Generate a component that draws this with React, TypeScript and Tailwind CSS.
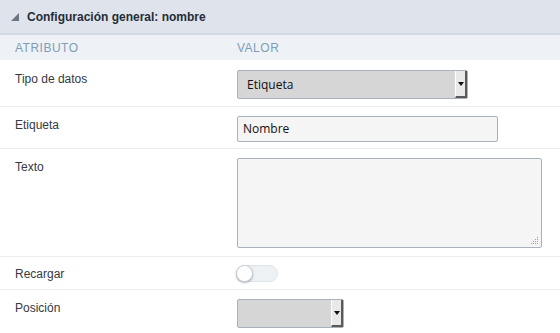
import React from 'react';

const label = "text-[12px] text-[#333a44]";

const SelectBox: React.FC<{ value: string; width: string }> = ({ value, width }) => (
  <div className={`${width} h-[29px] flex border border-[#a9b1bc] bg-[#d6d6d6] rounded-[2px]`}>
    <div className="flex-1 flex items-center pl-[9px] text-[12px] text-[#111] font-['Open_Sans',sans-serif]">{value}</div>
    <div className="w-[12px] flex items-center justify-center bg-[#e9e9e9] border-l border-l-white border-r-2 border-r-[#5a5a5a] border-b-2 border-b-[#5a5a5a]">
      <svg width="6" height="4" viewBox="0 0 6 4"><path d="M0 0h6L3 4z" fill="#111" /></svg>
    </div>
  </div>
);

const Row: React.FC<{ name: string; children: React.ReactNode; className?: string }> = ({ name, children, className }) => (
  <div className={`flex border-b border-[#eceff2] ${className ?? ''}`}>
    <div className={`w-[237px] shrink-0 pl-[15px] ${label}`}>{name}</div>
    <div className="flex-1">{children}</div>
  </div>
);

const App: React.FC = () => {
  return (
    <div className="w-[560px] h-[333px] bg-white overflow-hidden font-['Liberation_Sans',Arial,sans-serif]">
      <div className="h-[35px] flex items-center gap-[8px] pl-[11px] bg-[#dfe4ec] border-b-2 border-[#d3d9e2]">
        <svg width="8" height="8" viewBox="0 0 8 8"><path d="M8 0v8H0z" fill="#6b7480" /></svg>
        <span className="text-[12px] font-bold text-[#262c36]">Configuración general: nombre</span>
      </div>
      <div className="h-[25px] flex items-center bg-[#eef2f6] text-[12px] tracking-[0.5px] text-[#7f9db5]">
        <div className="w-[237px] shrink-0 pl-[15px]">ATRIBUTO</div>
        <div>VALOR</div>
      </div>
      <Row name="Tipo de datos" className="h-[47px] pt-[10px]">
        <SelectBox value="Etiqueta" width="w-[231px]" />
      </Row>
      <Row name="Etiqueta" className="h-[42px] pt-[9px]">
        <div className="w-[261px] h-[26px] flex items-center pl-[5px] bg-[#f5f5f5] border border-[#a9b1bc] rounded-[2px] text-[12px] text-[#111] font-['Open_Sans',sans-serif]">Nombre</div>
      </Row>
      <Row name="Texto" className="h-[108px] pt-[9px]">
        <div className="relative w-[305px] h-[90px] bg-[#f5f5f5] border border-[#a9b1bc] rounded-[2px]">
          <svg className="absolute right-[2px] bottom-[2px]" width="9" height="9" viewBox="0 0 9 9" fill="#9aa0a6">
            <rect x="7" y="1" width="1" height="1" />
            <rect x="5" y="3" width="1" height="1" /><rect x="7" y="3" width="1" height="1" />
            <rect x="3" y="5" width="1" height="1" /><rect x="5" y="5" width="1" height="1" /><rect x="7" y="5" width="1" height="1" />
            <rect x="1" y="7" width="1" height="1" /><rect x="3" y="7" width="1" height="1" /><rect x="5" y="7" width="1" height="1" /><rect x="7" y="7" width="1" height="1" />
          </svg>
        </div>
      </Row>
      <Row name="Recargar" className="h-[33px] pt-[8px]">
        <div className="relative w-[42px] h-[17px] ml-[-1px] rounded-full bg-[#eef1f4] border border-[#dfe3e8]">
          <div className="absolute left-[-1px] top-[-1px] w-[17px] h-[17px] rounded-full bg-white border border-[#c9ced4] shadow-[0_1px_2px_rgba(0,0,0,0.3)]" />
        </div>
      </Row>
      <Row name="Posición" className="h-[43px] pt-[9px] border-b-0">
        <SelectBox value="" width="w-[107px]" />
      </Row>
    </div>
  );
};

export default App;
